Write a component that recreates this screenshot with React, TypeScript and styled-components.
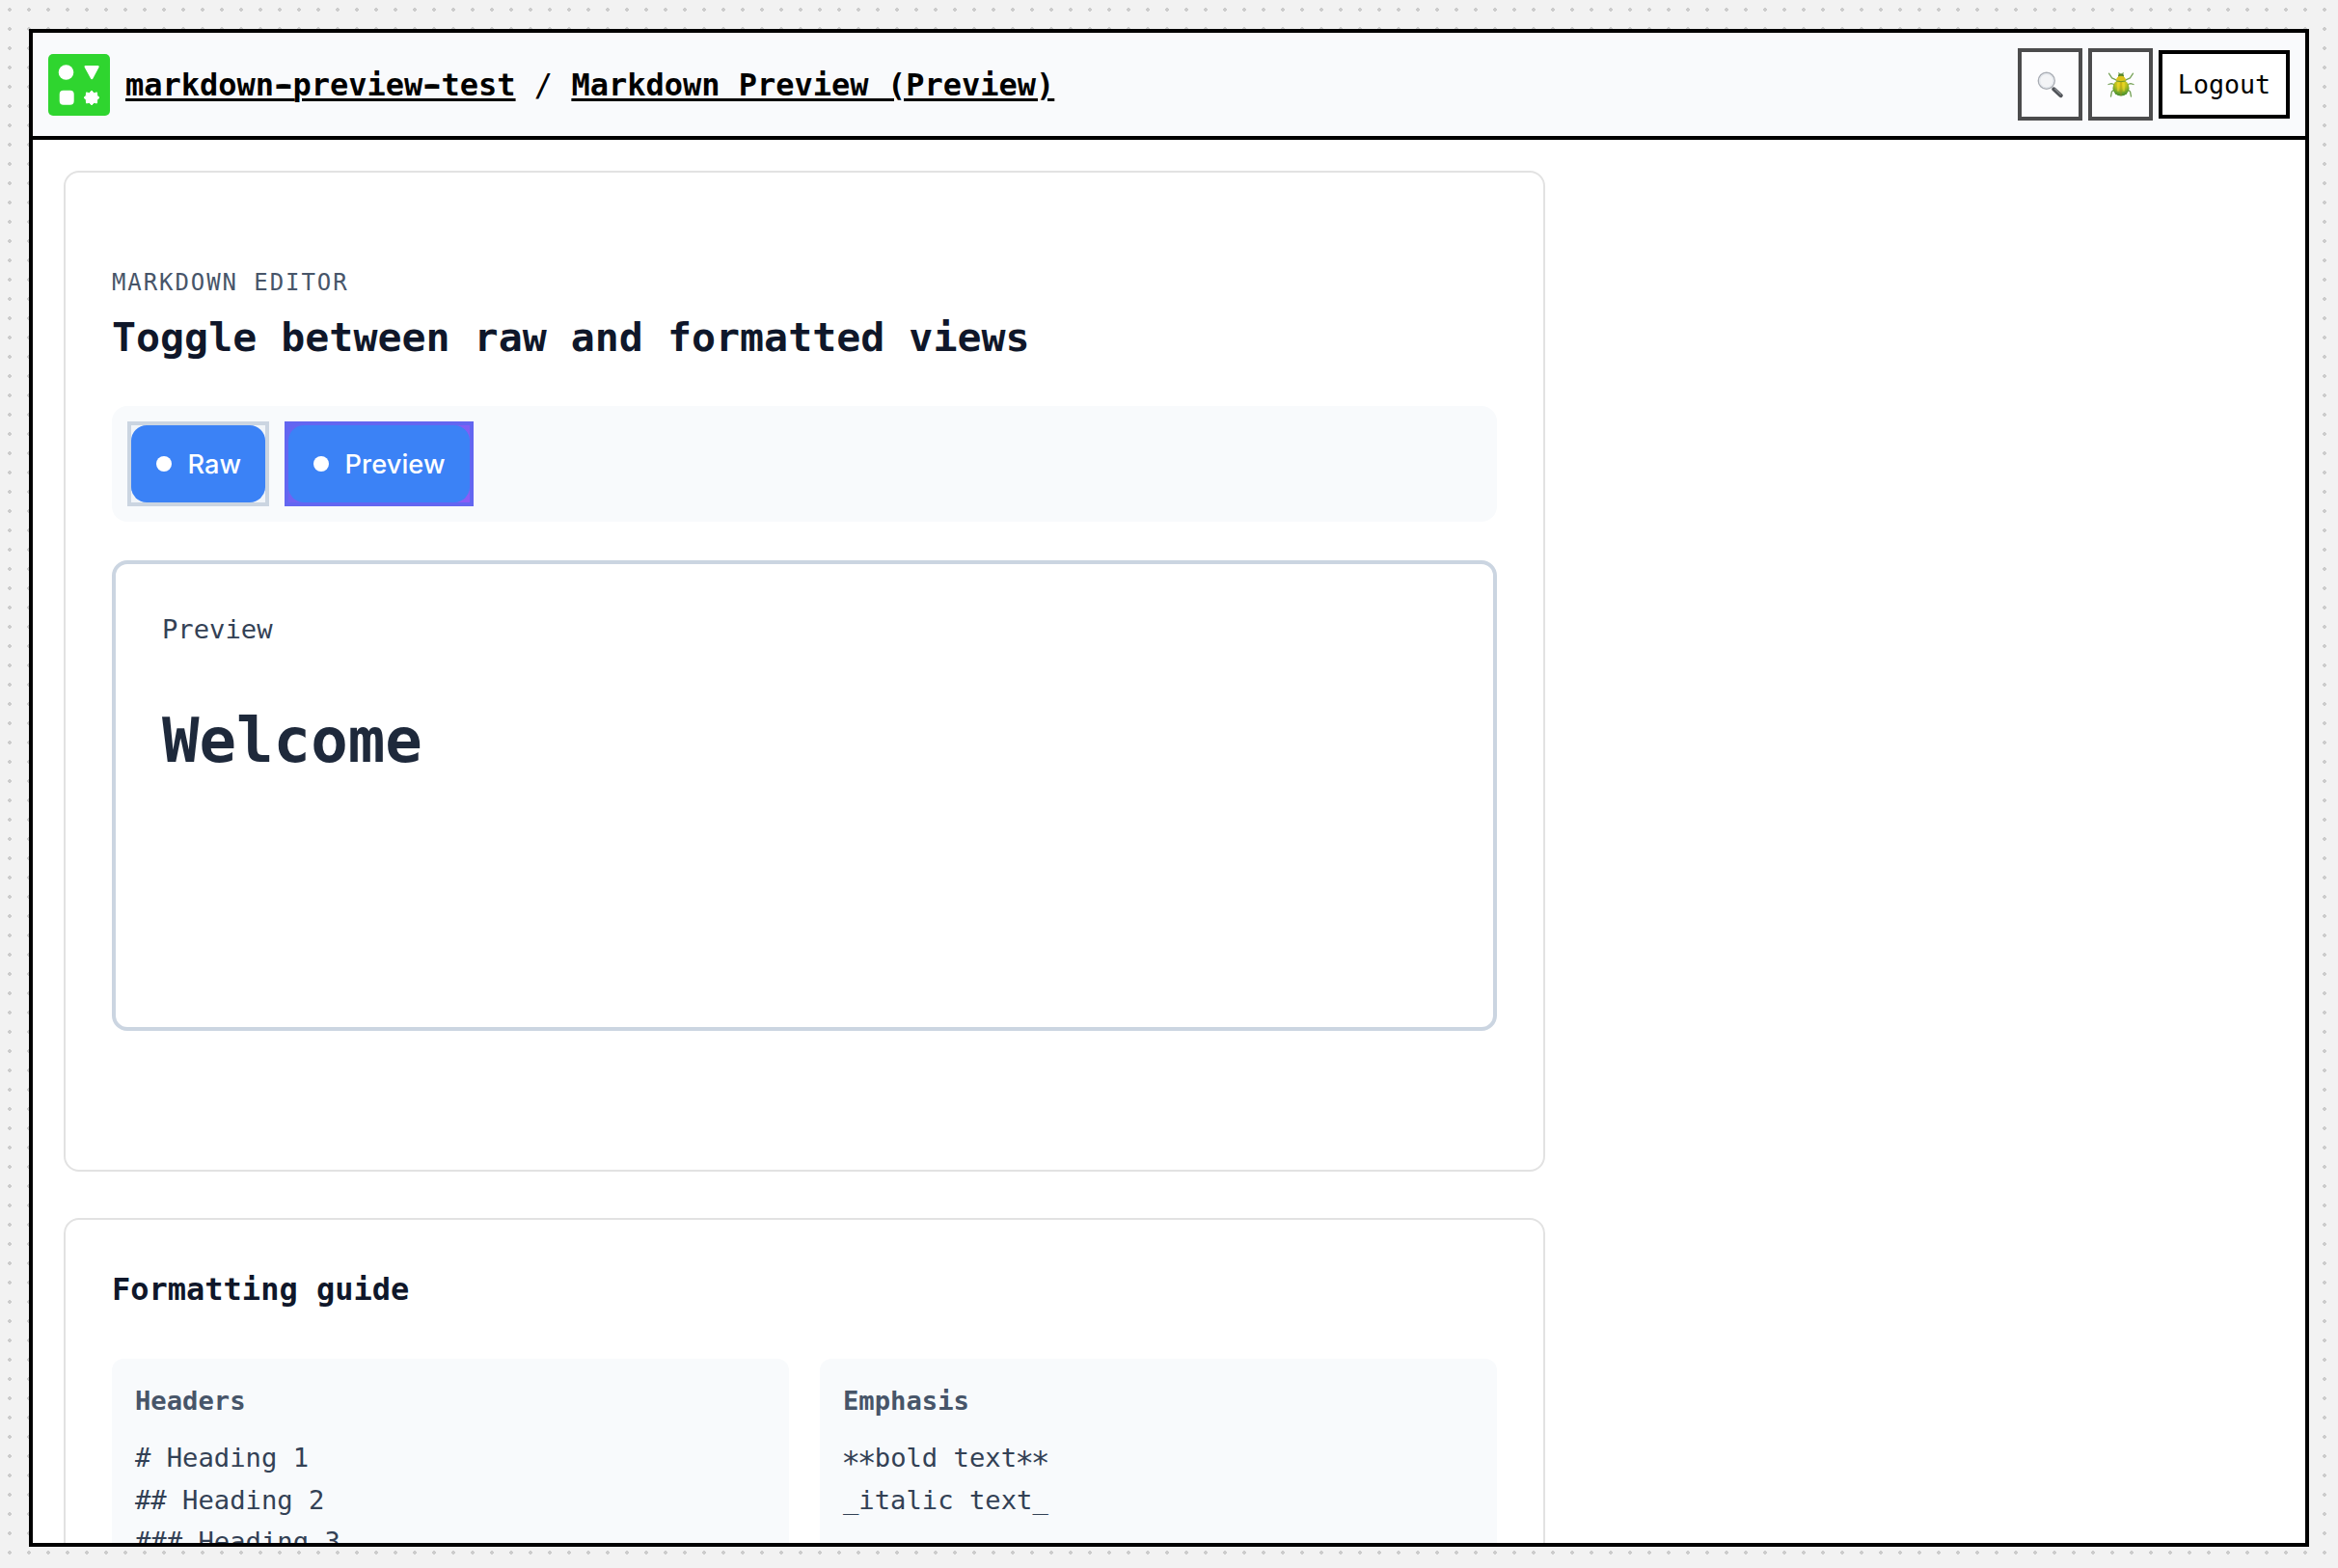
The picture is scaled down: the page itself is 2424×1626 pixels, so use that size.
import React from "react";
import styled, { createGlobalStyle } from "styled-components";

const mono = `"DejaVu Sans Mono", "Liberation Mono", monospace`;

const GlobalStyle = createGlobalStyle`
  *, *::before, *::after { box-sizing: border-box; }
  html, body { margin: 0; padding: 0; }
  body { overflow: hidden; font-family: ${mono}; }
  h1, h2, h3, p { margin: 0; }
`;

const Page = styled.div`
  display: flex;
  width: 100%;
  height: 1626px;
  padding: 30px 30px 22px;
  background-color: #f2f2f2;
  background-image: radial-gradient(#ccc 2px, transparent 2px);
  background-size: 20px 20px;
`;

const Frame = styled.main`
  flex: 1;
  display: flex;
  flex-direction: column;
  overflow: hidden;
  border: 4px solid #000;
  background: #fff;
`;

const Header = styled.header`
  flex: none;
  display: flex;
  align-items: center;
  justify-content: space-between;
  height: 111px;
  padding: 0 16px;
  border-bottom: 4px solid #000;
  background: #f9fafc;
`;

const Brand = styled.div`
  display: flex;
  align-items: center;
  gap: 16px;
`;

const Logo = styled.svg`
  display: block;
  width: 64px;
  height: 64px;
`;

const Crumbs = styled.nav`
  font-size: 32px;
  line-height: 48px;
  white-space: pre;
`;

const CrumbLink = styled.a`
  color: #000;
  font-weight: 700;
  text-decoration: underline;
  text-decoration-thickness: 3px;
  text-underline-offset: 3px;
`;

/* Widens the hyphen without changing its advance. */
const Hyphen = styled.span`
  text-shadow: -2.5px 0 0 #000, 2.5px 0 0 #000;
`;

const Actions = styled.div`
  display: flex;
  align-items: center;
  gap: 6px;
`;

const IconButton = styled.button`
  display: flex;
  align-items: center;
  justify-content: center;
  width: 67px;
  height: 75px;
  padding: 0;
  border: 4px solid #4c4c4d;
  background: #fdfdfe;
`;

const Glyph = styled.svg`
  display: block;
  width: 28px;
  height: 28px;
`;

const LogoutButton = styled.button`
  width: 136px;
  height: 71px;
  padding: 0;
  border: 4px solid #000;
  background: #fff;
  color: #000;
  font: 26.67px ${mono};
`;

const Content = styled.div`
  display: flex;
  flex-direction: column;
  gap: 48px;
  width: 1600px;
  padding: 32px;
`;

const Card = styled.section<{ $height: number; $top?: number }>`
  flex: none;
  display: flex;
  flex-direction: column;
  height: ${(p) => p.$height}px;
  padding: ${(p) => p.$top ?? 48}px 48px 48px;
  border: 2px solid #e2e2e2;
  border-radius: 16px;
  background: #fff;
`;

const Eyebrow = styled.p`
  margin-bottom: 8px;
  color: #475569;
  font-size: 24px;
  line-height: 36px;
  letter-spacing: 0.08em;
  text-transform: uppercase;
`;

const Title = styled.h1`
  margin-bottom: 40px;
  color: #0f172a;
  font-size: 41.6px;
  line-height: 62px;
`;

const Toolbar = styled.div`
  display: flex;
  gap: 16px;
  height: 120px;
  margin-bottom: 40px;
  padding: 16px;
  border-radius: 16px;
  background: #f8fafc;
`;

const Toggle = styled.button<{ $active?: boolean; $width: number }>`
  display: flex;
  width: ${(p) => p.$width}px;
  height: 88px;
  padding: 0;
  border: 4px solid ${(p) => (p.$active ? "#6366f1" : "#cbd5e1")};
  background: ${(p) =>
    p.$active ? "linear-gradient(135deg, #6366f1, #8b5cf6) padding-box" : "#f1f5f9"};
`;

const ToggleFace = styled.span`
  flex: 1;
  display: flex;
  align-items: center;
  gap: 16.5px;
  height: 80px;
  padding-left: 26px;
  border-radius: 16px;
  background: #3b82f6;
  color: #fff;
  font: 500 27.2px Inter, sans-serif;
  letter-spacing: 0.1px;
  white-space: nowrap;
`;

const Dot = styled.span`
  flex: none;
  width: 16px;
  height: 16px;
  border-radius: 50%;
  background: #fff;
`;

const PreviewPane = styled.div`
  height: 488px;
  padding: 47px 48px;
  border: 4px solid #cbd5e1;
  border-radius: 16px;
`;

const PaneLabel = styled.p`
  margin-bottom: 47px;
  color: #334155;
  font-size: 27.2px;
  line-height: 41px;
`;

const PaneHeading = styled.h1`
  color: #1e293b;
  font-size: 64px;
  line-height: 96px;
`;

const GuideTitle = styled.h2`
  margin-bottom: 48px;
  color: #0f172a;
  font-size: 32px;
  line-height: 48px;
`;

const GuideGrid = styled.div`
  display: grid;
  grid-template-columns: 1fr 1fr;
  gap: 32px;
`;

const GuideItem = styled.article`
  height: 240px;
  padding: 24px;
  border-radius: 12px;
  background: #f8fafc;
`;

const GuideHeading = styled.h3`
  margin-bottom: 16.4px;
  color: #475569;
  font-size: 27.2px;
  line-height: 40.8px;
`;

const GuideLine = styled.p`
  color: #334155;
  font-size: 27.2px;
  line-height: 43.52px;
`;

/* Large, lowered asterisks on the same character grid as the line. */
const Star = styled.span`
  margin: 0 1.75px 0 -1.75px;
  font-size: 33px;
  line-height: 0;
  letter-spacing: -3.49px;
  vertical-align: -8px;
`;

const guides = [
  { name: "Headers", lines: ["# Heading 1", "## Heading 2", "### Heading 3"] },
  { name: "Emphasis", lines: ["**bold text**", "_italic text_"] },
];

const withStars = (line: string) =>
  line.split(/(\*+)/).map((part, i) => (part.startsWith("*") ? <Star key={i}>{part}</Star> : part));

const withHyphens = (name: string) =>
  name.split(/(-)/).map((part, i) => (part === "-" ? <Hyphen key={i}>-</Hyphen> : part));

const BrandLogo = () => (
  <Logo viewBox="0 0 64 64">
    <rect width="64" height="64" rx="5" fill="#2fd52f" />
    <g fill="#fff">
      <circle cx="18.5" cy="19" r="7.8" />
      <path
        d="M38.8 13.2h12.6L45.2 24.8Z"
        stroke="#fff"
        strokeWidth="2.6"
        strokeLinejoin="round"
      />
      <rect x="11.7" y="37.8" width="15" height="15" rx="4" />
      <path
        d="M45 38l2.3 2.7 3.2-.8.2 3.3 2.3 2.1-2.3 2.1-.2 3.5-3.2-.5L45 53l-2.3-2.6-3.2.5-.2-3.5-2.3-2.1 2.3-2.1.2-3.3 3.2.8Z"
        strokeLinejoin="round"
        stroke="#fff"
        strokeWidth="1"
      />
    </g>
  </Logo>
);

const MagnifierGlyph = () => (
  <Glyph viewBox="0 0 28 28">
    <path d="M17.5 18.5l7 6.5" stroke="#505358" strokeWidth="4.4" strokeLinecap="round" />
    <path d="M18.5 18.2l6 5.6" stroke="#8d9095" strokeWidth="1.1" strokeLinecap="round" />
    <circle cx="9.8" cy="9.8" r="8.5" fill="#f3f4f6" stroke="#a9adb4" strokeWidth="1.4" />
    <circle cx="9.8" cy="9.8" r="7.1" fill="none" stroke="#dfe4ea" strokeWidth="1" />
  </Glyph>
);

const BeetleGlyph = () => (
  <Glyph viewBox="0 0 28 28">
    <defs>
      <radialGradient id="beetleShell" cx="0.5" cy="0.25" r="0.75">
        <stop offset="0" stopColor="#f0d216" />
        <stop offset="0.4" stopColor="#c6c41c" />
        <stop offset="0.75" stopColor="#6fa52b" />
        <stop offset="1" stopColor="#41892f" />
      </radialGradient>
    </defs>
    <g fill="none" stroke="#76a258" strokeWidth="1.3" strokeLinecap="round" strokeLinejoin="round">
      <path d="M9 8.8L4.6 6.8 1.5 2.2M19 8.8l4.4-2 3.1-4.6" />
      <path d="M7 13.5l-3-.9-3 .9M21 13.5l3-.9 3 .9" />
      <path d="M7.5 18.5l-3 2.5-1 5M20.5 18.5l3 2.5 1 5" />
      <path d="M12.6 3.2L11.8 1.8M15.4 3.2l.8-1.4" />
    </g>
    <ellipse cx="14" cy="4.8" rx="3" ry="2.5" fill="#53852a" />
    <path d="M8.8 9.8C9.2 6.4 11 4.8 14 4.8s4.8 1.6 5.2 5Z" fill="#dcc31a" />
    <ellipse cx="14" cy="17.2" rx="8.5" ry="8.4" fill="url(#beetleShell)" />
    <path d="M8.8 9.9q5.2 1.6 10.4 0" fill="none" stroke="#5f8f2a" strokeWidth="0.9" />
    <path d="M14 10.6v14.8" stroke="#a08f1a" strokeWidth="0.8" />
    <path d="M11 12v8M17 12v8" stroke="#f2de39" strokeWidth="1.3" strokeLinecap="round" opacity="0.7" />
  </Glyph>
);

export default function App() {
  return (
    <>
      <GlobalStyle />
      <Page>
        <Frame>
          <Header>
            <Brand>
              <BrandLogo />
              <Crumbs>
                <CrumbLink>{withHyphens("markdown-preview-test")}</CrumbLink>
                {" / "}
                <CrumbLink>Markdown Preview (Preview)</CrumbLink>
              </Crumbs>
            </Brand>
            <Actions>
              <IconButton aria-label="Search">
                <MagnifierGlyph />
              </IconButton>
              <IconButton aria-label="Debug">
                <BeetleGlyph />
              </IconButton>
              <LogoutButton>Logout</LogoutButton>
            </Actions>
          </Header>
          <Content>
            <Card $height={1038} $top={96}>
              <Eyebrow>Markdown editor</Eyebrow>
              <Title>Toggle between raw and formatted views</Title>
              <Toolbar>
                <Toggle $width={147}>
                  <ToggleFace>
                    <Dot />
                    Raw
                  </ToggleFace>
                </Toggle>
                <Toggle $width={196} $active>
                  <ToggleFace>
                    <Dot />
                    Preview
                  </ToggleFace>
                </Toggle>
              </Toolbar>
              <PreviewPane>
                <PaneLabel>Preview</PaneLabel>
                <PaneHeading>Welcome</PaneHeading>
              </PreviewPane>
            </Card>
            <Card $height={500}>
              <GuideTitle>Formatting guide</GuideTitle>
              <GuideGrid>
                {guides.map((guide) => (
                  <GuideItem key={guide.name}>
                    <GuideHeading>{guide.name}</GuideHeading>
                    {guide.lines.map((line) => (
                      <GuideLine key={line}>{withStars(line)}</GuideLine>
                    ))}
                  </GuideItem>
                ))}
              </GuideGrid>
            </Card>
          </Content>
        </Frame>
      </Page>
    </>
  );
}
